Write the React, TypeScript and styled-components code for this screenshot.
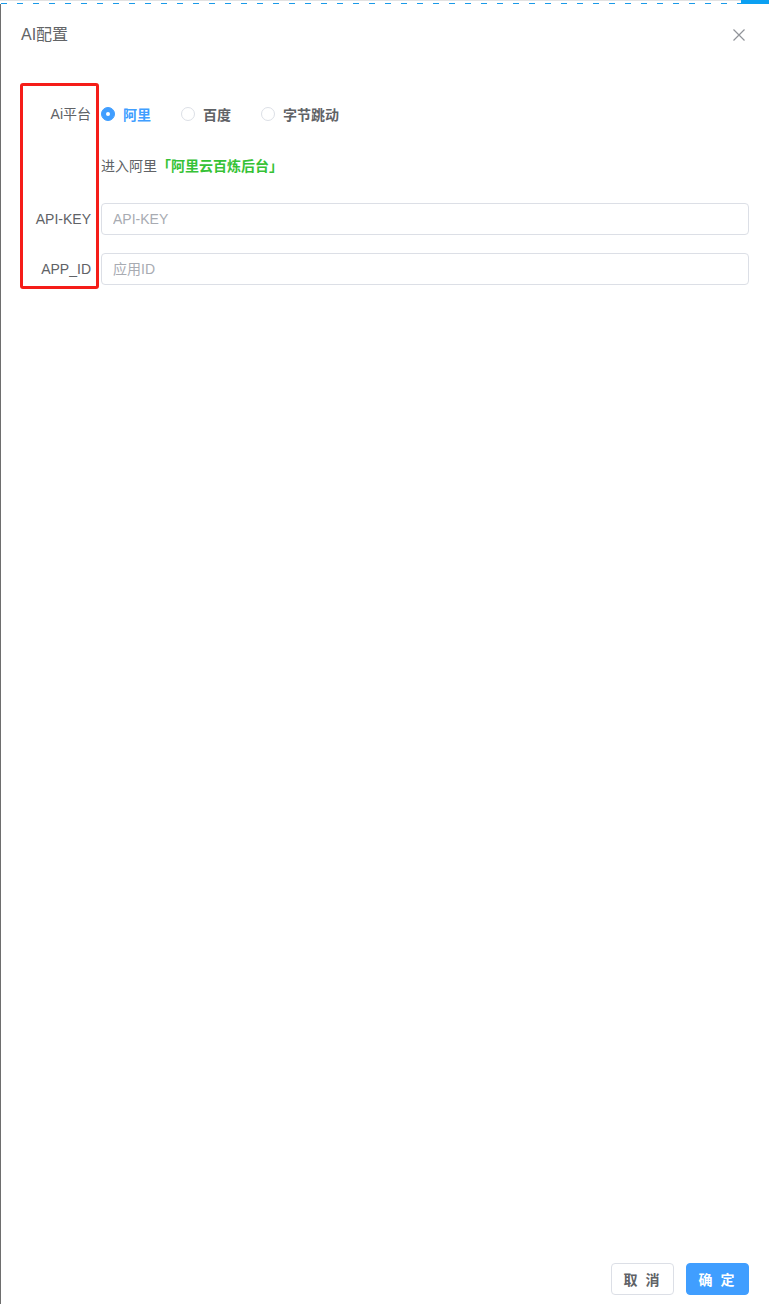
import React from "react";
import styled, { createGlobalStyle } from "styled-components";

const GlobalStyle = createGlobalStyle`
  html, body {
    margin: 0;
    padding: 0;
    background: #ffffff;
  }
  body {
    font-family: "Liberation Sans", "Noto Sans CJK SC", sans-serif;
    font-size: 14px;
    color: #606266;
  }
`;

const Page = styled.div`
  position: relative;
  width: 769px;
  height: 1304px;
  display: flex;
  flex-direction: column;
  overflow: hidden;
`;

const TopStrip = styled.div`
  display: flex;
  height: 4px;
  flex-shrink: 0;
`;

const DashedEdge = styled.div`
  flex: 1;
  height: 4px;
  box-sizing: border-box;
  border-top: 1px solid #e2e2e2;
  background-image: repeating-linear-gradient(
    to right,
    transparent 0 1px,
    #1a9ae8 1px 7px,
    transparent 7px 16px
  );
  background-size: 100% 1px;
  background-position: 0 2px;
  background-repeat: no-repeat;
`;

const BlueTab = styled.div`
  width: 28px;
  height: 4px;
  background: #0ba0f2;
`;

const Dialog = styled.div`
  flex: 1;
  display: flex;
  flex-direction: column;
  border-left: 1px solid #6e6e6e;
  padding: 19px 20px 9px;
`;

const Header = styled.div`
  display: flex;
  align-items: center;
  justify-content: space-between;
  height: 24px;
`;

const Title = styled.span`
  font-size: 16px;
  line-height: 24px;
  color: #626466;
`;

const CloseButton = styled.button`
  background: none;
  border: none;
  padding: 0;
  margin-right: 3px;
  width: 14px;
  height: 14px;
  display: flex;
  align-items: center;
  justify-content: center;
  cursor: pointer;
`;

const Form = styled.form`
  margin-top: 51px;
  display: flex;
  flex-direction: column;
`;

const FormItem = styled.div<{ $gap?: number }>`
  display: flex;
  align-items: center;
  min-height: 32px;
  margin-bottom: ${(p) => p.$gap ?? 18}px;
`;

const Label = styled.label`
  width: 80px;
  flex-shrink: 0;
  box-sizing: border-box;
  padding-right: 10px;
  text-align: right;
  font-size: 14px;
  line-height: 32px;
  color: #606266;
`;

const Content = styled.div`
  flex: 1;
  display: flex;
  align-items: center;
`;

const RadioLabel = styled.label<{ $checked?: boolean }>`
  display: inline-flex;
  align-items: center;
  margin-right: 30px;
  font-size: 14px;
  font-weight: 700;
  color: ${(p) => (p.$checked ? "#409eff" : "#606266")};
  cursor: pointer;
`;

const RadioDot = styled.span<{ $checked?: boolean }>`
  width: 14px;
  height: 14px;
  box-sizing: border-box;
  border-radius: 50%;
  margin-right: 8px;
  border: 1px solid ${(p) => (p.$checked ? "#409eff" : "#dcdfe6")};
  background: ${(p) => (p.$checked ? "#409eff" : "#fff")};
  display: flex;
  align-items: center;
  justify-content: center;

  &::after {
    content: "";
    width: 4px;
    height: 4px;
    border-radius: 50%;
    background: #fff;
    display: ${(p) => (p.$checked ? "block" : "none")};
  }
`;

const Hint = styled.span`
  font-size: 14px;
  color: #606266;
  line-height: 37px;
`;

const ConsoleLink = styled.a`
  font-weight: 700;
  color: #36c236;
  text-decoration: none;
`;

const TextInput = styled.input`
  flex: 1;
  height: 32px;
  box-sizing: border-box;
  border: 1px solid #dcdfe6;
  border-radius: 4px;
  padding: 0 11px;
  font-family: inherit;
  font-size: 14px;
  color: #606266;
  outline: none;

  &::placeholder {
    color: #a8abb2;
  }
`;

const Footer = styled.div`
  margin-top: auto;
  display: flex;
  justify-content: flex-end;
  gap: 12px;
`;

const Button = styled.button<{ $primary?: boolean }>`
  width: 63px;
  height: 32px;
  box-sizing: border-box;
  border-radius: 4px;
  font-family: inherit;
  font-size: 14px;
  font-weight: 700;
  letter-spacing: 2px;
  cursor: pointer;
  border: 1px solid ${(p) => (p.$primary ? "#409eff" : "#dcdfe6")};
  background: ${(p) => (p.$primary ? "#409eff" : "#fff")};
  color: ${(p) => (p.$primary ? "#fff" : "#606266")};
`;

const Highlight = styled.div`
  position: absolute;
  left: 20px;
  top: 83px;
  width: 79px;
  height: 206px;
  box-sizing: border-box;
  border: 3px solid #f51d18;
  border-radius: 3px;
  pointer-events: none;
`;

const platforms = [
  { key: "ali", name: "阿里" },
  { key: "baidu", name: "百度" },
  { key: "bytedance", name: "字节跳动" },
];

export default function App() {
  const [platform, setPlatform] = React.useState("ali");

  return (
    <Page>
      <GlobalStyle />
      <TopStrip>
        <DashedEdge />
        <BlueTab />
      </TopStrip>
      <Dialog>
        <Header>
          <Title>AI配置</Title>
          <CloseButton type="button" aria-label="关闭">
            <svg width="12" height="12" viewBox="0 0 12 12">
              <path d="M0.5 0.5 L11.5 11.5 M11.5 0.5 L0.5 11.5" stroke="#909399" strokeWidth="1.2" />
            </svg>
          </CloseButton>
        </Header>

        <Form onSubmit={(e) => e.preventDefault()}>
          <FormItem>
            <Label>Ai平台</Label>
            <Content>
              {platforms.map((p) => (
                <RadioLabel
                  key={p.key}
                  $checked={platform === p.key}
                  onClick={() => setPlatform(p.key)}
                >
                  <RadioDot $checked={platform === p.key} />
                  {p.name}
                </RadioLabel>
              ))}
            </Content>
          </FormItem>

          <FormItem $gap={18}>
            <Label />
            <Content>
              <Hint>
                进入阿里<ConsoleLink href="#">「阿里云百炼后台」</ConsoleLink>
              </Hint>
            </Content>
          </FormItem>

          <FormItem>
            <Label>API-KEY</Label>
            <Content>
              <TextInput placeholder="API-KEY" />
            </Content>
          </FormItem>

          <FormItem>
            <Label>APP_ID</Label>
            <Content>
              <TextInput placeholder="应用ID" />
            </Content>
          </FormItem>
        </Form>

        <Footer>
          <Button type="button">取 消</Button>
          <Button type="button" $primary>
            确 定
          </Button>
        </Footer>
      </Dialog>
      <Highlight />
    </Page>
  );
}
